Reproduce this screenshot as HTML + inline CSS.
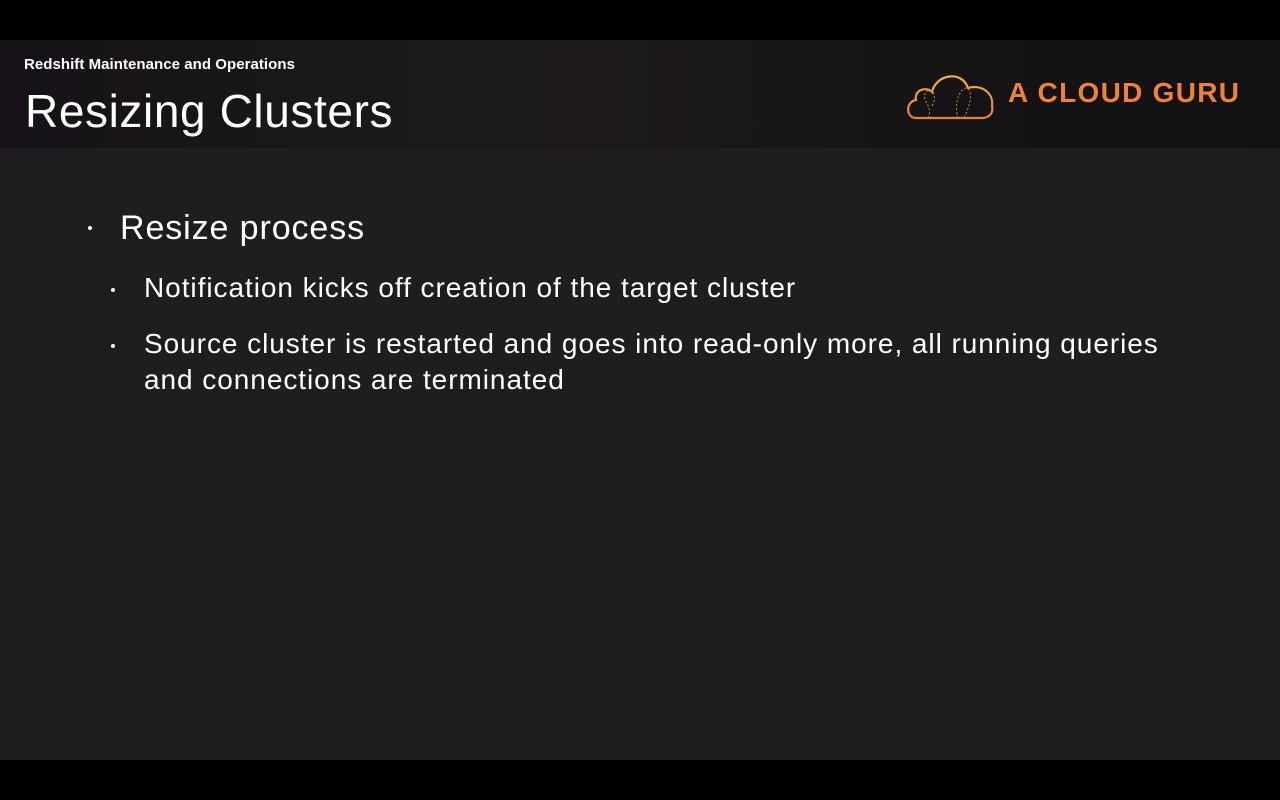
<!DOCTYPE html>
<html><head><style>
body{margin:0;width:1280px;height:800px;background:#000;overflow:hidden;font-family:"Liberation Sans",sans-serif;color:#fff}
.slide{position:absolute;left:0;top:40px;width:1280px;height:720px;background:#1f1d20}
.hdr{position:absolute;left:0;top:0;width:1280px;height:108px;background:linear-gradient(90deg,#161218 0%,#1b1918 30%,#1e1a1c 45%,#161416 70%,#121111 100%)}
.sub{position:absolute;left:24px;top:16px;font-size:15px;font-weight:bold;letter-spacing:0.05px}
.title{position:absolute;left:25px;top:44px;font-size:46px;letter-spacing:0.6px}
.logo{position:absolute;left:1008px;top:37px;font-size:28px;font-weight:bold;color:#f0813a;letter-spacing:1.3px}
.b{position:absolute;white-space:nowrap}
.l1{font-size:34px;left:120px;top:169px;letter-spacing:0.9px}
.l2{font-size:28px;left:144px;letter-spacing:0.95px;line-height:36px}
.dot{position:absolute;width:4px;height:4px;border-radius:2px;background:#fff}
</style></head><body>
<div class="slide">
<div class="hdr">
<div class="sub">Redshift Maintenance and Operations</div>
<div class="title">Resizing Clusters</div>
<svg style="position:absolute;left:904px;top:26px" width="94" height="56" viewBox="0 0 94 56">
<defs><linearGradient id="g" x1="0" y1="0" x2="0" y2="1"><stop offset="0" stop-color="#f2b13a"/><stop offset="1" stop-color="#ef7a3a"/></linearGradient></defs>
<path d="M12 52 C2 52 1 36 12 34 C10 24 22 20 28 26 C32 8 58 4 64 22 C76 18 90 26 88 40 C90 48 84 52 78 52 Z" fill="none" stroke="url(#g)" stroke-width="2.2"/>
<path d="M24 52 C30 40 16 34 22 26 C28 20 34 30 28 40 M54 52 C50 40 54 24 62 22 C70 24 66 40 60 52" fill="none" stroke="#c88a3a" stroke-width="1" stroke-dasharray="2 2"/>
</svg>
<div class="logo">A CLOUD GURU</div>
</div>
<div class="dot" style="left:88px;top:186px"></div>
<div class="b l1">Resize process</div>
<div class="dot" style="left:111px;top:248px"></div>
<div class="b l2" style="top:230px">Notification kicks off creation of the target cluster</div>
<div class="dot" style="left:111px;top:304px"></div>
<div class="b l2" style="top:286px">Source cluster is restarted and goes into read-only more, all running queries<br>and connections are terminated</div>
</div>
</body></html>
